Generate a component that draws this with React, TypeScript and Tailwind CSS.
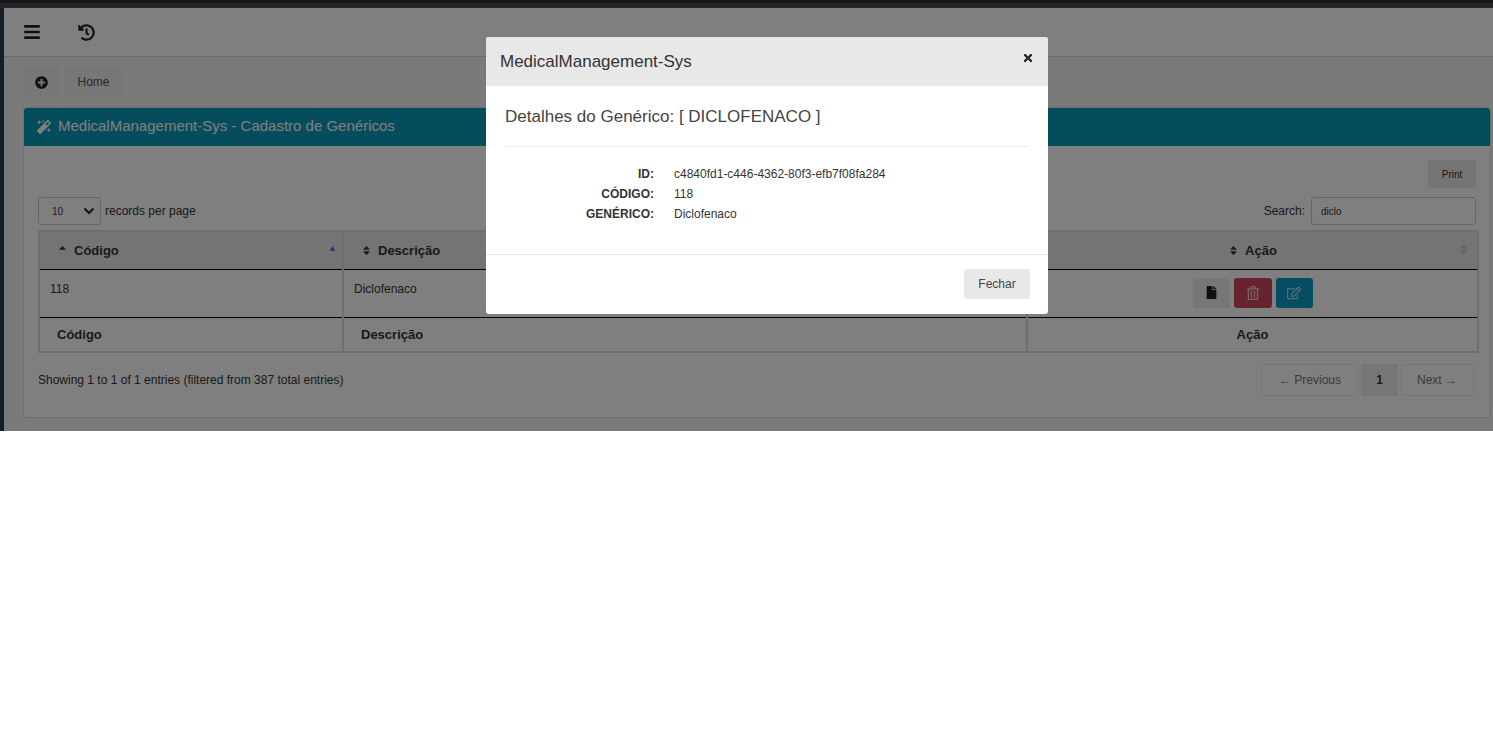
import { FaBars, FaHistory, FaPlusCircle, FaMagic, FaSort, FaSortUp, FaFile, FaRegTrashAlt, FaRegEdit, FaTimes } from "react-icons/fa";

function Head({ icon, label, center }: { icon?: boolean; label: string; center?: boolean }) {
  return <span className={center ? "flex items-center justify-center gap-[6px]" : "flex items-center gap-[6px]"}><FaSort className="text-[11px]" />{label}</span>;
}

export default function App() {
  return (
    <div className="relative h-[431px] overflow-hidden bg-[#f4f4f4] font-['Liberation_Sans',Arial,sans-serif] text-[12px] text-[#333]">
      <div className="h-[8px] bg-[#4a4a4a] border-t-[3px] border-[#2a2a30]" />
      <div className="flex">
        <div className="w-[4px] shrink-0 h-[423px] bg-[#2c3b55]" />
        <div className="flex-1 min-w-0">
          <div className="h-[49px] bg-white border-b border-[#d8d8d8] flex items-center pl-[19px] gap-[37px] text-[#222] text-[17px]">
            <FaBars className="text-[18px]" />
            <FaHistory className="text-[17px]" />
          </div>
          <div className="pl-[19px] pr-[2px] bg-[#f4f4f4]">
            <div className="flex gap-[4px] pt-[10px] h-[50px]">
              <div className="w-[37px] h-[30px] bg-[#eee] rounded-[3px] flex items-center justify-center text-[#222] text-[13px]"><FaPlusCircle /></div>
              <div className="w-[59px] h-[30px] bg-[#eee] rounded-[3px] flex items-center justify-center text-[#555]">Home</div>
            </div>
            <div className="h-[311px] bg-white border border-[#ddd] rounded-[4px] overflow-hidden">
              <div className="h-[39px] -mt-px -mx-px bg-[#0a9bb8] flex items-center pl-[14px] gap-[7px] text-white text-[15px]">
                <FaMagic className="text-[14px]" />
                MedicalManagement-Sys - Cadastro de Genéricos
              </div>
              <div className="px-[14px]">
                <div className="flex justify-end pt-[14px] pr-[0px]">
                  <div className="w-[48px] h-[28px] bg-[#e8e8e8] rounded-[3px] flex items-center justify-center text-[10px] text-[#333]">Print</div>
                </div>
                <div className="flex justify-between mt-[9px] h-[28px]">
                  <div className="flex items-center gap-[4px]">
                    <div className="w-[63px] h-[28px] border border-[#ccc] rounded-[3px] flex items-center justify-between pl-[13px] pr-[5px] text-[10px] bg-white">10
                      <svg width="12" height="8" viewBox="0 0 12 8"><path d="M1.5 1.5 6 6l4.5-4.5" fill="none" stroke="#222" strokeWidth="2" /></svg>
                    </div>
                    <span>records per page</span>
                  </div>
                  <div className="flex items-center gap-[6px]">
                    <span>Search:</span>
                    <div className="w-[165px] h-[28px] border border-[#ccc] rounded-[3px] flex items-center pl-[9px] text-[10px] bg-white">diclo</div>
                  </div>
                </div>
                <table className="mt-[5px] w-[1441px] table-fixed border-collapse border-2 border-[#ddd]">
                  <colgroup><col className="w-[304px]" /><col className="w-[684px]" /><col /></colgroup>
                  <thead>
                    <tr className="h-[38px] bg-[#e8e8e8] font-bold text-[13px] border-b border-black">
                      <th className="text-left pl-[17px] relative border-r-2 border-[#ddd]">
                        <span className="flex items-center gap-[6px]"><FaSortUp className="text-[11px]" />Código</span>
                        <span className="absolute right-[5px] top-[10px] text-[#6a6ad8] text-[9px]">▲</span>
                      </th>
                      <th className="text-left pl-[17px] border-r-2 border-[#ddd]"><Head label="Descrição" /></th>
                      <th className="relative"><Head label="Ação" center /><FaSort className="absolute right-[7px] top-[11px] text-[13px] text-[#ccc]" /></th>
                    </tr>
                  </thead>
                  <tbody>
                    <tr className="h-[48px] border-b border-black">
                      <td className="align-top pt-[10px] pl-[10px] border-r-2 border-[#ddd]">118</td>
                      <td className="align-top pt-[10px] pl-[10px] border-r-2 border-[#ddd]">Diclofenaco</td>
                      <td>
                        <div className="flex justify-center gap-[4px] pb-[1px]">
                          <div className="w-[37px] h-[30px] bg-[#eee] rounded-[3px] flex items-center justify-center text-[#222] text-[13px]"><FaFile /></div>
                          <div className="w-[38px] h-[30px] bg-[#ce4760] rounded-[3px] flex items-center justify-center text-white/70 text-[14px]"><FaRegTrashAlt /></div>
                          <div className="w-[37px] h-[30px] bg-[#0a9bc4] rounded-[3px] flex items-center justify-center text-white/70 text-[14px]"><FaRegEdit /></div>
                        </div>
                      </td>
                    </tr>
                  </tbody>
                  <tfoot>
                    <tr className="h-[35px] font-bold text-[13px]">
                      <th className="text-left pl-[17px] border-r-2 border-[#ddd]">Código</th>
                      <th className="text-left pl-[17px] border-r-2 border-[#ddd]">Descrição</th>
                      <th>Ação</th>
                    </tr>
                  </tfoot>
                </table>
                <div className="flex justify-between mt-[11px] pr-[2px]">
                  <div className="pt-[7px]">Showing 1 to 1 of 1 entries (filtered from 387 total entries)</div>
                  <div className="flex gap-[2px] text-[#777]">
                    <div className="w-[98px] h-[32px] border border-[#eee] rounded-[3px] flex items-center justify-center">← Previous</div>
                    <div className="w-[37px] h-[32px] bg-[#eee] rounded-[3px] flex items-center justify-center font-bold text-[#333]">1</div>
                    <div className="w-[74px] h-[32px] border border-[#eee] rounded-[3px] flex items-center justify-center">Next →</div>
                  </div>
                </div>
              </div>
            </div>
          </div>
        </div>
      </div>
      <div className="absolute inset-0 bg-black/50" />
      <div className="absolute left-[486px] top-[37px] w-[562px] h-[277px] bg-white rounded-[3px] overflow-hidden flex flex-col">
        <div className="h-[49px] bg-[#e8e8e8] flex items-center justify-between pl-[14px] pr-[14px] text-[17px] text-[#333]">
          <span>MedicalManagement-Sys</span>
          <FaTimes className="text-[12px] text-[#222] mb-[7px]" />
        </div>
        <div className="h-[169px] px-[19px] border-b border-[#e5e5e5]">
          <div className="h-[61px] border-b border-[#eee] pt-[20px] text-[17px] text-[#444] leading-[22px]">Detalhes do Genérico: [ DICLOFENACO ]</div>
          <div className="grid grid-cols-[149px_1fr] gap-x-[20px] mt-[17px] leading-[20px] text-[#333]">
            <span className="text-right font-bold">ID:</span><span>c4840fd1-c446-4362-80f3-efb7f08fa284</span>
            <span className="text-right font-bold">CÓDIGO:</span><span>118</span>
            <span className="text-right font-bold">GENÉRICO:</span><span>Diclofenaco</span>
          </div>
        </div>
        <div className="flex-1 flex items-center justify-end pr-[18px] pb-[1px]">
          <div className="w-[66px] h-[30px] bg-[#e8e8e8] rounded-[3px] flex items-center justify-center text-[#444]">Fechar</div>
        </div>
      </div>
    </div>
  );
}
